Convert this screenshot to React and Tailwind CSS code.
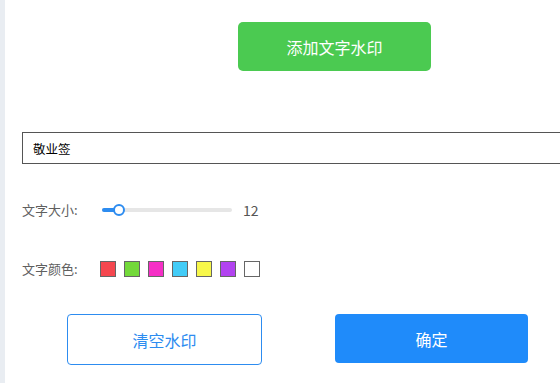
import React, { useState } from "react";

const COLORS = [
  "#f5474f",
  "#73d93a",
  "#f52fc6",
  "#42ccf7",
  "#f7f74a",
  "#b243f0",
  "#ffffff",
];

const App = () => {
  const [text, setText] = useState("敬业签");
  const [size] = useState(12);

  return (
    <div
      className="w-[560px] h-[383px] overflow-hidden bg-white flex"
      style={{ fontFamily: '"Noto Sans CJK SC", "Microsoft YaHei", sans-serif' }}
    >
      {/* left edge strip */}
      <div className="w-[5px] shrink-0 bg-[#e9edf2]" />

      <div className="flex-1 flex flex-col pt-[22px]">
        {/* add watermark */}
        <div className="pl-[233px]">
          <button className="w-[193px] h-[49px] rounded-[5px] bg-[#4bca51] text-white text-[16px]">
            添加文字水印
          </button>
        </div>

        {/* text input */}
        <div className="mt-[61px] pl-[17px]">
          <input
            value={text}
            onChange={(e) => setText(e.target.value)}
            className="w-[600px] h-[32px] border border-[#555] px-[10px] text-[12.5px] text-black outline-none"
          />
        </div>

        {/* size slider */}
        <div className="mt-[36px] pl-[17px] flex items-center h-[20px]">
          <span className="w-[80px] text-[13px] text-[#606060]">文字大小:</span>
          <div className="relative w-[130px] h-[4px] rounded-full bg-[#e6e6e6]">
            <div className="absolute left-0 top-0 h-[4px] w-[17px] rounded-full bg-[#2d8cf0]" />
            <div className="absolute left-[11px] top-[-4px] w-[12px] h-[12px] rounded-full bg-white border-[2.5px] border-[#2d8cf0]" />
          </div>
          <span className="ml-[11px] text-[14px] text-[#555]">{size}</span>
        </div>

        {/* colors */}
        <div className="mt-[39px] pl-[17px] flex items-center h-[20px]">
          <span className="w-[78px] text-[13px] text-[#606060]">文字颜色:</span>
          <div className="flex gap-[8px]">
            {COLORS.map((c) => (
              <div
                key={c}
                className="w-[16px] h-[16px] border border-[#666]"
                style={{ backgroundColor: c }}
              />
            ))}
          </div>
        </div>

        {/* actions */}
        <div className="mt-[35px] pl-[62px] flex items-start">
          <button className="w-[195px] h-[51px] rounded-[4px] border border-[#2d8cf0] text-[#2d8cf0] text-[16px] bg-white">
            清空水印
          </button>
          <button className="ml-[73px] w-[193px] h-[49px] rounded-[4px] bg-[#1f8bfa] text-white text-[16px]">
            确定
          </button>
        </div>
      </div>
    </div>
  );
};

export default App;
